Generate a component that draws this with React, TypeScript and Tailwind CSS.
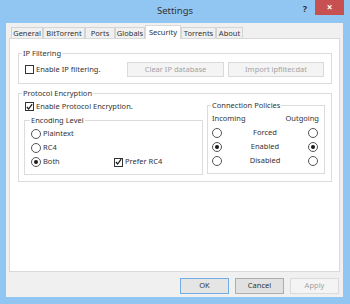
import type { ReactNode } from 'react';

const CheckBox = ({ checked }: { checked?: boolean }) => (
  <span className="flex h-[9px] w-[9px] shrink-0 items-center justify-center border border-[#333] bg-white">
    {checked && (
      <svg width="8" height="8" viewBox="0 0 8 8">
        <polyline points="1,4 3,6.3 7,0.8" fill="none" stroke="#1a1a1a" strokeWidth="1.4" />
      </svg>
    )}
  </span>
);

const Radio = ({ checked }: { checked?: boolean }) => (
  <span className="flex h-[10px] w-[10px] shrink-0 items-center justify-center rounded-full border border-[#555] bg-white">
    {checked && <span className="h-[4px] w-[4px] rounded-full bg-[#1a1a1a]" />}
  </span>
);

interface GroupProps {
  title: string;
  className: string;
  captionClass: string;
  children: ReactNode;
}

const GroupBox = ({ title, className, captionClass, children }: GroupProps) => (
  <div className={`flex shrink-0 flex-col border border-[#dcdcdc] ${className}`}>
    <div className={`-mt-[7px] h-[12px] w-fit bg-white px-[1px] leading-[12px] ${captionClass}`}>{title}</div>
    {children}
  </div>
);

const tabs = [
  { name: 'General', w: 'w-[32px]' },
  { name: 'BitTorrent', w: 'w-[42px]' },
  { name: 'Ports', w: 'w-[30px]' },
  { name: 'Globals', w: 'w-[30px]' },
  { name: 'Security', w: 'w-[36px]', active: true },
  { name: 'Torrents', w: 'w-[35px]' },
  { name: 'About', w: 'w-[27px]' },
];

export default function App() {
  return (
    <div className="flex h-[304px] w-[350px] flex-col bg-[#91c5f2] font-['Noto_Sans',sans-serif] text-[7.5px] text-[#333]">
      {/* title bar */}
      <div className="relative flex h-[23px] shrink-0 items-center justify-center">
        <span className="text-[9.5px] text-[#333]">Settings</span>
        <span className="absolute right-[43px] top-[2px] text-[9px] font-bold text-[#333]">?</span>
        <div className="absolute right-[6px] top-0 flex h-[15px] w-[29px] items-center justify-center bg-[#c75050] text-[10px] font-bold text-white">
          ×
        </div>
      </div>

      {/* client */}
      <div className="ml-[6px] mr-[7px] flex h-[274px] flex-col bg-[#f0f0f0]">
        <div className="mt-[2px] flex h-[13px] items-end pl-[5px]">
          {tabs.map((t) =>
            t.active ? (
              <div
                key={t.name}
                className={`relative z-10 -mb-[1px] flex h-[14px] items-start justify-center border border-b-0 border-[#d9d9d9] bg-white pt-[1px] leading-[11px] ${t.w}`}
              >
                {t.name}
              </div>
            ) : (
              <div
                key={t.name}
                className={`flex h-[11px] items-center justify-center border border-b-0 border-[#d4d4d4] bg-[#f0f0f0] leading-[11px] ${t.w}`}
              >
                {t.name}
              </div>
            )
          )}
        </div>

        {/* tab panel */}
        <div className="ml-[3px] flex h-[234px] w-[331px] flex-col border border-[#d9d9d9] bg-white">
          <GroupBox title="IP Filtering" className="ml-[8px] mt-[14px] h-[31px] w-[314px]" captionClass="ml-[3px]">
            <div className="mt-[3px] flex h-[15px] items-center pl-[6px] pr-[7px]">
              <CheckBox />
              <span className="ml-[2px]">Enable IP filtering.</span>
              <div className="ml-auto flex gap-[4px]">
                <div className="flex h-[15px] w-[97px] items-center justify-center border border-[#dadada] bg-[#f4f4f4] text-[#a3a3a3]">
                  Clear IP database
                </div>
                <div className="flex h-[15px] w-[96px] items-center justify-center border border-[#dadada] bg-[#f4f4f4] text-[#a3a3a3]">
                  Import ipfilter.dat
                </div>
              </div>
            </div>
          </GroupBox>

          <GroupBox title="Protocol Encryption" className="ml-[8px] mt-[9px] h-[89px] w-[314px]" captionClass="ml-[3px]">
            <div className="flex pl-[5px]">
              <div className="flex w-[179px] flex-col">
                <div className="mt-[2px] flex h-[11px] items-center pl-[1px]">
                  <CheckBox checked />
                  <span className="ml-[2px]">Enable Protocol Encryption.</span>
                </div>
                <GroupBox title="Encoding Level" className="mt-[8px] h-[55px] w-[179px]" captionClass="ml-[5px]">
                  <div className="mt-[1px] flex flex-col pl-[6px]">
                    <div className="flex h-[14px] items-center gap-[2px]">
                      <Radio />
                      <span>Plaintext</span>
                    </div>
                    <div className="flex h-[14px] items-center gap-[2px]">
                      <Radio />
                      <span>RC4</span>
                    </div>
                    <div className="flex h-[14px] items-center">
                      <div className="flex w-[83px] items-center gap-[2px]">
                        <Radio checked />
                        <span>Both</span>
                      </div>
                      <CheckBox checked />
                      <span className="ml-[2px]">Prefer RC4</span>
                    </div>
                  </div>
                </GroupBox>
              </div>

              <GroupBox title="Connection Policies" className="ml-[4px] mt-[6px] h-[69px] w-[118px]" captionClass="ml-[3px]">
                <div className="mt-[2px] flex h-[12px] items-center justify-between pl-[4px] pr-[5px]">
                  <span>Incoming</span>
                  <span>Outgoing</span>
                </div>
                <div className="mt-[1px] flex flex-col pl-[4px] pr-[6px]">
                  {[
                    { label: 'Forced', on: false },
                    { label: 'Enabled', on: true },
                    { label: 'Disabled', on: false },
                  ].map((r) => (
                    <div key={r.label} className="flex h-[14px] items-center">
                      <Radio checked={r.on} />
                      <span className="flex-1 text-center">{r.label}</span>
                      <Radio checked={r.on} />
                    </div>
                  ))}
                </div>
              </GroupBox>
            </div>
          </GroupBox>
        </div>

        {/* buttons */}
        <div className="mt-[6px] flex justify-end gap-[6px] pr-[4px]">
          <div className="flex h-[16px] w-[49px] items-center justify-center border border-[#72aee6] bg-[#e5e5e5]">OK</div>
          <div className="flex h-[16px] w-[49px] items-center justify-center border border-[#adadad] bg-[#e1e1e1]">Cancel</div>
          <div className="flex h-[16px] w-[49px] items-center justify-center border border-[#dadada] bg-[#f4f4f4] text-[#a3a3a3]">
            Apply
          </div>
        </div>
      </div>
    </div>
  );
}
